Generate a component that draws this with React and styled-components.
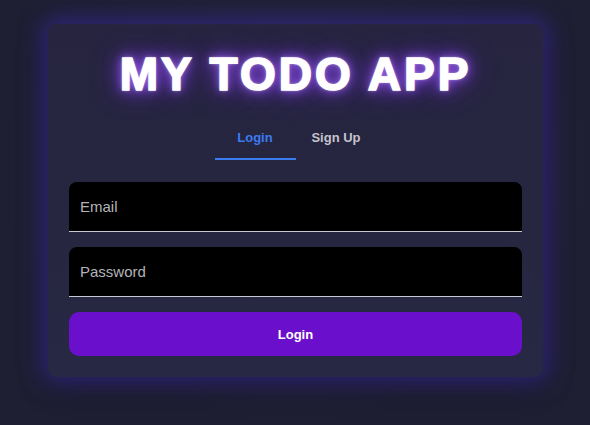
import React, { useState } from "react"
import styled, { createGlobalStyle } from "styled-components"

const GlobalStyle = createGlobalStyle`
  html, body {
    margin: 0;
    padding: 0;
    background: #1f1f33;
    font-family: "Liberation Sans", Arial, sans-serif;
  }
`

const Page = styled.div`
  width: 590px;
  height: 425px;
  padding: 24px 47px 0 48px;
  box-sizing: border-box;
  background: radial-gradient(ellipse at 50% 40%, #25253d 0%, #1f1f33 70%);
`

const Card = styled.div`
  background: linear-gradient(180deg, #26243f 0%, #272843 100%);
  border-radius: 9px;
  padding: 20px 21px 21px;
  box-shadow: 0 0 22px 6px rgba(66, 48, 180, 0.55), 0 8px 30px rgba(0, 0, 0, 0.4);
`

const Title = styled.h1`
  margin: 3px 0 0;
  text-align: center;
  font-family: "Liberation Sans", Arial, sans-serif;
  font-weight: 900;
  font-size: 46px;
  line-height: 54px;
  letter-spacing: 3px;
  color: #fff;
  -webkit-text-stroke: 1.6px #fff;
  text-shadow: 0 0 3px rgba(255, 255, 255, 0.7), 0 0 10px #9a62ec,
    0 0 18px #7b3fe0, 0 0 28px #6a30c8;
`

const Tabs = styled.div`
  display: flex;
  justify-content: center;
  margin-top: 15px;
`

const Tab = styled.button`
  width: 81px;
  height: 44px;
  padding: 0;
  border: none;
  background: transparent;
  font-family: "Liberation Sans", Arial, sans-serif;
  font-weight: 700;
  font-size: 13px;
  color: ${(p) => (p.$active ? "#3a7bf0" : "#c4c4cc")};
  border-bottom: 2px solid ${(p) => (p.$active ? "#3a7bf0" : "transparent")};
  cursor: pointer;
`

const Form = styled.form`
  display: flex;
  flex-direction: column;
  gap: 15px;
  margin-top: 22px;
`

const Input = styled.input`
  height: 50px;
  box-sizing: border-box;
  padding: 0 11px;
  border: none;
  border-bottom: 1px solid #c8c8d4;
  border-radius: 8px 8px 0 0;
  background: #000;
  color: #ddd;
  font-family: "Liberation Sans", Arial, sans-serif;
  font-size: 15px;
  outline: none;

  &::placeholder {
    color: #b4b4b8;
  }
`

const Submit = styled.button`
  height: 44px;
  border: none;
  border-radius: 10px;
  background: #6a10cc;
  color: #fff;
  font-family: "Liberation Sans", Arial, sans-serif;
  font-weight: 700;
  font-size: 13px;
  cursor: pointer;
`

export default function App() {
  const [tab, setTab] = useState("login")

  return (
    <>
      <GlobalStyle />
      <Page>
        <Card>
          <Title>MY TODO APP</Title>
          <Tabs>
            <Tab $active={tab === "login"} onClick={() => setTab("login")}>
              Login
            </Tab>
            <Tab $active={tab === "signup"} onClick={() => setTab("signup")}>
              Sign Up
            </Tab>
          </Tabs>
          <Form onSubmit={(e) => e.preventDefault()}>
            <Input type="email" placeholder="Email" />
            <Input type="password" placeholder="Password" />
            <Submit type="submit">Login</Submit>
          </Form>
        </Card>
      </Page>
    </>
  )
}
